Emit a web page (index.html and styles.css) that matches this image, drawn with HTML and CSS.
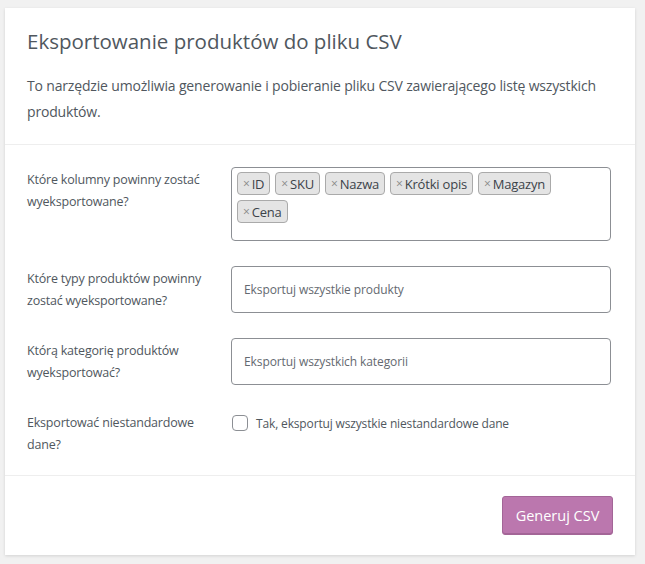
FILE: index.html
```html
<!DOCTYPE html>
<html lang="pl">
  <head>
    <meta charset="UTF-8" />
    <meta name="viewport" content="width=device-width, initial-scale=1.0" />
    <title>Eksportowanie produktów do pliku CSV</title>
    <link rel="stylesheet" href="styles.css">
  </head>
  <body>
  <div class="exporter">
      <header class="exporter-header">
          <h2>Eksportowanie produktów do pliku CSV</h2>
          <p>To narzędzie umożliwia generowanie i pobieranie pliku CSV zawierającego listę wszystkich produktów.</p>
      </header>

      <section class="exporter-form">
          <label class="row-label">Które kolumny powinny zostać wyeksportowane?</label>
          <div class="tags">
              <span class="tag"><span class="tag-remove">×</span>ID</span>
              <span class="tag"><span class="tag-remove">×</span>SKU</span>
              <span class="tag"><span class="tag-remove">×</span>Nazwa</span>
              <span class="tag"><span class="tag-remove">×</span>Krótki opis</span>
              <span class="tag"><span class="tag-remove">×</span>Magazyn</span>
              <span class="tag"><span class="tag-remove">×</span>Cena</span>
          </div>

          <label class="row-label">Które typy produktów powinny zostać wyeksportowane?</label>
          <input type="text" class="field" placeholder="Eksportuj wszystkie produkty">

          <label class="row-label">Którą kategorię produktów wyeksportować?</label>
          <input type="text" class="field" placeholder="Eksportuj wszystkich kategorii">

          <label class="row-label">Eksportować niestandardowe dane?</label>
          <label class="check">
              <input type="checkbox" class="check-box">
              <span>Tak, eksportuj wszystkie niestandardowe dane</span>
          </label>
      </section>

      <footer class="exporter-footer">
          <button class="button-primary">Generuj CSV</button>
      </footer>
  </div>
  </body>
</html>
```

FILE: styles.css
```css
body {
  background-color: #f1f1f1;
  margin: 0;
  padding: 8px 10px 9px 5px;
  font-family: "Open Sans", "Noto Sans", sans-serif;
  color: #50575e;
}

.exporter {
  width: 630px;
  background-color: #fff;
  box-shadow: 0 1px 3px rgba(0, 0, 0, 0.13);
}

.exporter-header {
  padding: 20px 22px 19px;
  border-bottom: 1px solid #eee;
}

.exporter-header h2 {
  margin: 0;
  font-size: 20.5px;
  font-weight: 400;
  line-height: 26px;
  color: #50575e;
}

.exporter-header p {
  margin: 19px 0 0;
  font-size: 14px;
  letter-spacing: -0.17px;
  line-height: 26px;
}

.exporter-form {
  display: grid;
  grid-template-columns: 204px 380px;
  row-gap: 25px;
  padding: 22px 24px 19px 22px;
  border-bottom: 1px solid #eee;
}

.row-label {
  font-size: 12.5px;
  letter-spacing: -0.2px;
  line-height: 22px;
  padding-top: 2px;
  padding-right: 24px;
}

.tags {
  display: flex;
  flex-wrap: wrap;
  align-content: flex-start;
  gap: 5px;
  height: 74px;
  box-sizing: border-box;
  padding: 4px 5px;
  border: 1px solid #8c8f94;
  border-radius: 4px;
}

.tag {
  display: flex;
  align-items: center;
  height: 23px;
  box-sizing: border-box;
  padding: 0 5px;
  background-color: #e4e4e4;
  border: 1px solid #aaa;
  border-radius: 4px;
  font-size: 13px;
  letter-spacing: -0.2px;
  color: #3c434a;
}

.tag-remove {
  color: #888;
  font-size: 12px;
  margin-right: 2px;
}

.field {
  height: 47px;
  box-sizing: border-box;
  margin: 0;
  padding: 0 12px;
  border: 1px solid #8c8f94;
  border-radius: 4px;
  font-family: inherit;
  font-size: 12px;
  letter-spacing: -0.1px;
}

.field::placeholder {
  color: #646970;
}

.check {
  display: flex;
  align-items: center;
  gap: 8px;
  height: 22px;
  margin-top: 2px;
  font-size: 12px;
  letter-spacing: -0.15px;
}

.check-box {
  appearance: none;
  width: 16px;
  height: 16px;
  margin: 0 0 0 1px;
  border: 1px solid #8c8f94;
  border-radius: 4px;
  background-color: #fff;
}

.exporter-footer {
  padding: 20px 22px 20px;
  text-align: right;
}

.button-primary {
  width: 111px;
  height: 39px;
  background-color: #bb77ae;
  border: 1px solid #a36597;
  border-radius: 3px;
  box-shadow: inset 0 -1px 0 #a36597;
  color: #fff;
  font-family: inherit;
  font-size: 14.5px;
  cursor: pointer;
}
```
